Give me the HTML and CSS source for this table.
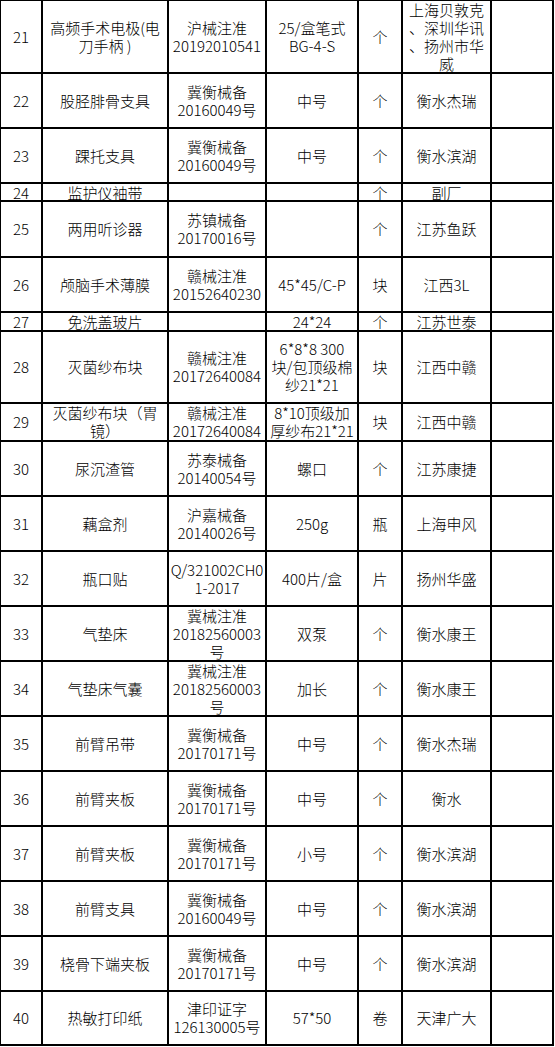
FILE: index.html
```html
<!DOCTYPE html>
<html lang="zh-CN">
<head>
<meta charset="utf-8">
<title>耗材清单</title>
<link rel="stylesheet" href="styles.css">
</head>
<body>
<div class="sheet">
  <div class="row"><div class="c">21</div><div class="c">高频手术电极(电<br>刀手柄 )</div><div class="c">沪械注准<br>20192010541</div><div class="c">25/盒笔式<br>BG-4-S</div><div class="c">个</div><div class="c">上海贝敦克<br>、深圳华讯<br>、扬州市华<br>威</div><div class="c"></div></div>
  <div class="row"><div class="c">22</div><div class="c">股胫腓骨支具</div><div class="c">冀衡械备<br>20160049号</div><div class="c">中号</div><div class="c">个</div><div class="c">衡水杰瑞</div><div class="c"></div></div>
  <div class="row"><div class="c">23</div><div class="c">踝托支具</div><div class="c">冀衡械备<br>20160049号</div><div class="c">中号</div><div class="c">个</div><div class="c">衡水滨湖</div><div class="c"></div></div>
  <div class="row short"><div class="c">24</div><div class="c">监护仪袖带</div><div class="c"></div><div class="c"></div><div class="c">个</div><div class="c">副厂</div><div class="c"></div></div>
  <div class="row"><div class="c">25</div><div class="c">两用听诊器</div><div class="c">苏镇械备<br>20170016号</div><div class="c"></div><div class="c">个</div><div class="c">江苏鱼跃</div><div class="c"></div></div>
  <div class="row"><div class="c">26</div><div class="c">颅脑手术薄膜</div><div class="c">赣械注准<br>20152640230</div><div class="c">45*45/C-P</div><div class="c">块</div><div class="c">江西3L</div><div class="c"></div></div>
  <div class="row short"><div class="c">27</div><div class="c">免洗盖玻片</div><div class="c"></div><div class="c">24*24</div><div class="c">个</div><div class="c">江苏世泰</div><div class="c"></div></div>
  <div class="row"><div class="c">28</div><div class="c">灭菌纱布块</div><div class="c">赣械注准<br>20172640084</div><div class="c">6*8*8 300<br>块/包顶级棉<br>纱21*21</div><div class="c">块</div><div class="c">江西中赣</div><div class="c"></div></div>
  <div class="row"><div class="c">29</div><div class="c">灭菌纱布块（胃<br>镜）</div><div class="c">赣械注准<br>20172640084</div><div class="c">8*10顶级加<br>厚纱布21*21</div><div class="c">块</div><div class="c">江西中赣</div><div class="c"></div></div>
  <div class="row"><div class="c">30</div><div class="c">尿沉渣管</div><div class="c">苏泰械备<br>20140054号</div><div class="c">螺口</div><div class="c">个</div><div class="c">江苏康捷</div><div class="c"></div></div>
  <div class="row"><div class="c">31</div><div class="c">藕盒剂</div><div class="c">沪嘉械备<br>20140026号</div><div class="c">250g</div><div class="c">瓶</div><div class="c">上海申风</div><div class="c"></div></div>
  <div class="row"><div class="c">32</div><div class="c">瓶口贴</div><div class="c">Q/321002CH0<br>1-2017</div><div class="c">400片/盒</div><div class="c">片</div><div class="c">扬州华盛</div><div class="c"></div></div>
  <div class="row"><div class="c">33</div><div class="c">气垫床</div><div class="c">冀械注准<br>20182560003<br>号</div><div class="c">双泵</div><div class="c">个</div><div class="c">衡水康王</div><div class="c"></div></div>
  <div class="row"><div class="c">34</div><div class="c">气垫床气囊</div><div class="c">冀械注准<br>20182560003<br>号</div><div class="c">加长</div><div class="c">个</div><div class="c">衡水康王</div><div class="c"></div></div>
  <div class="row"><div class="c">35</div><div class="c">前臂吊带</div><div class="c">冀衡械备<br>20170171号</div><div class="c">中号</div><div class="c">个</div><div class="c">衡水杰瑞</div><div class="c"></div></div>
  <div class="row"><div class="c">36</div><div class="c">前臂夹板</div><div class="c">冀衡械备<br>20170171号</div><div class="c">中号</div><div class="c">个</div><div class="c">衡水</div><div class="c"></div></div>
  <div class="row"><div class="c">37</div><div class="c">前臂夹板</div><div class="c">冀衡械备<br>20170171号</div><div class="c">小号</div><div class="c">个</div><div class="c">衡水滨湖</div><div class="c"></div></div>
  <div class="row"><div class="c">38</div><div class="c">前臂支具</div><div class="c">冀衡械备<br>20160049号</div><div class="c">中号</div><div class="c">个</div><div class="c">衡水滨湖</div><div class="c"></div></div>
  <div class="row"><div class="c">39</div><div class="c">桡骨下端夹板</div><div class="c">冀衡械备<br>20170171号</div><div class="c">中号</div><div class="c">个</div><div class="c">衡水滨湖</div><div class="c"></div></div>
  <div class="row"><div class="c">40</div><div class="c">热敏打印纸</div><div class="c">津印证字<br>126130005号</div><div class="c">57*50</div><div class="c">卷</div><div class="c">天津广大</div><div class="c"></div></div>
</div>
</body>
</html>
```
FILE: styles.css
```css
html, body {
  margin: 0;
  padding: 0;
  background: #fff;
}

body {
  width: 555px;
  height: 1047px;
  overflow: hidden;
  font-family: "Noto Sans CJK SC", "Noto Sans", sans-serif;
  font-weight: 300;
  font-size: 15px;
  line-height: 18px;
  color: #000;
}

.sheet {
  display: grid;
  grid-template-columns: 40px 124px 96px 90px 42px 87px 60px;
  grid-template-rows: 71px 53px 53px 16px 54px 53px 17px 70px 36px 53px 53px 53px 53px 53px 53px 53px 53px 53px 53px 52px;
  gap: 2px;
  padding: 2px;
  background: #000;
  margin: -1px 0 0 -1px;
  width: max-content;
}

.row {
  display: contents;
}

.c {
  background: #fff;
  display: flex;
  align-items: center;
  justify-content: center;
  text-align: center;
  overflow: hidden;
  white-space: nowrap;
}

.short .c {
  align-items: flex-start;
}
```
